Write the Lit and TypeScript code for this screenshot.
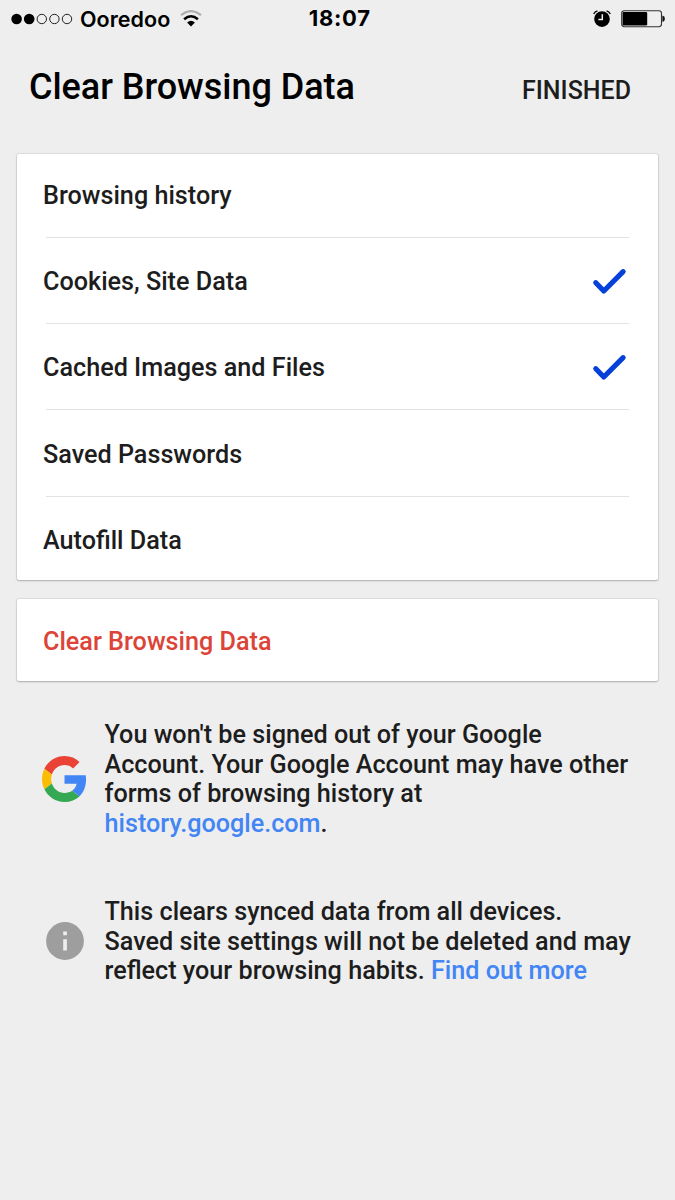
import { LitElement, html, css, svg } from "lit";
import { customElement } from "lit/decorators.js";

interface Option {
  label: string;
  checked: boolean;
}

const OPTIONS: Option[] = [
  { label: "Browsing history", checked: false },
  { label: "Cookies, Site Data", checked: true },
  { label: "Cached Images and Files", checked: true },
  { label: "Saved Passwords", checked: false },
  { label: "Autofill Data", checked: false },
];

@customElement("status-bar")
class StatusBar extends LitElement {
  static styles = css`
    :host {
      display: grid;
      grid-template-columns: 1fr auto 1fr;
      align-items: center;
      height: 37px;
      padding: 0 10px 0 11px;
      box-sizing: border-box;
      color: #000;
      font-family: Inter, "Liberation Sans", sans-serif;
      font-size: 21.5px;
      line-height: 26px;
    }
    svg { display: block; }
    .left { display: flex; align-items: center; }
    .carrier { margin-left: 7px; font-weight: 600; letter-spacing: 0.05px; }
    .wifi { margin-left: 10px; }
    .time { font-weight: 700; letter-spacing: 0.75px; font-size: 22px; padding-left: 3.5px; margin-top: -1px; }
    .right { display: flex; align-items: center; justify-content: flex-end; gap: 10px; }
  `;
  render() {
    return html`
      <div class="left">
        <svg width="62" height="12" viewBox="0 0 62 12">
          ${[0, 1, 2, 3, 4].map((i) =>
            i < 2
              ? svg`<circle cx=${5.6 + i * 12.6} cy="6" r="5.3" fill="#000" />`
              : svg`<circle cx=${5.6 + i * 12.6} cy="6" r="4.7" fill="none" stroke="#222" stroke-width="1" />`
          )}
        </svg>
        <span class="carrier">Ooredoo</span>
        <svg class="wifi" width="22" height="18" viewBox="0 0 22 18">
          <path d="M1 5.2 Q11 -3 21 5.2" fill="none" stroke="#adadad" stroke-width="2.2" />
          <path d="M4.1 9.2 Q11 3.4 17.9 9.2" fill="none" stroke="#000" stroke-width="2.5" />
          <path d="M7.1 12.6 Q11 9 14.9 12.6 L11 16.6 Z" fill="#000" />
        </svg>
      </div>
      <div class="time">18:07</div>
      <div class="right">
        <svg width="18" height="18" viewBox="0 0 18 18">
          <circle cx="9" cy="9.1" r="7.8" fill="#000" />
          <path d="M9.3 4.2 V9.4 H5.4" fill="none" stroke="#eee" stroke-width="1.5" />
          <path d="M0.7 4 Q1.8 1.6 4.4 0.9 M17.3 4 Q16.2 1.6 13.6 0.9" fill="none" stroke="#000" stroke-width="1.3" />
        </svg>
        <svg width="44" height="18" viewBox="0 0 44 18">
          <rect x="0.7" y="0.7" width="39.8" height="16" rx="2.6" fill="none" stroke="#333" stroke-width="1.1" />
          <rect x="1.6" y="1.9" width="24.6" height="13.6" rx="1.2" fill="#000" />
          <path d="M41.4 5.4 Q43.9 5.9 43.9 8.7 Q43.9 11.5 41.4 12 Z" fill="#111" />
        </svg>
      </div>
    `;
  }
}

@customElement("option-row")
class OptionRow extends LitElement {
  static properties = { label: {}, checked: { type: Boolean } };
  static styles = css`
    :host { display: flex; align-items: center; justify-content: space-between; }
    svg { display: block; margin-right: 2px; }
  `;
  declare label: string;
  declare checked: boolean;
  render() {
    return html`
      <span>${this.label}</span>
      ${this.checked
        ? html`<svg width="36" height="30" viewBox="0 0 36 30">
            <path d="M4.8 15.7 L12.8 24 L32.1 4.7" fill="none" stroke="#0541d8" stroke-width="5.2" stroke-linecap="round" stroke-linejoin="round" />
          </svg>`
        : ""}
    `;
  }
}

@customElement("app-root")
export class AppRoot extends LitElement {
  static styles = css`
    :host {
      display: block;
      box-sizing: border-box;
      min-height: 1200px;
      background: #eee;
      color: #1d1d1d;
      font-family: Roboto, "Liberation Sans", sans-serif;
      font-size: 25.2px;
      font-weight: 500;
      line-height: 29.5px;
    }
    .header {
      display: flex;
      align-items: baseline;
      justify-content: space-between;
      height: 93px;
      padding: 29px 44px 0 29px;
      margin-bottom: 23.5px;
      box-sizing: border-box;
    }
    h1 {
      margin: 0;
      color: #000;
      font-size: 36px;
      font-weight: 500;
      line-height: 42px;
      letter-spacing: -0.04px;
    }
    .done { font-size: 25px; }
    .card {
      margin: 0 17px 19px;
      background: #fff;
      border-radius: 2px;
      box-shadow: 0 0 1px 1px rgba(0, 0, 0, 0.07), 0 1px 2px rgba(0, 0, 0, 0.22);
    }
    .options {
      display: grid;
      grid-template-rows: 84px 86.3px 86.3px 86.5px 83.9px;
      padding: 0 29px 0 26px;
    }
    .line { display: grid; grid-template-rows: 1fr 1px; }
    .line option-row { padding-top: 3px; }
    .line:first-child option-row { padding-top: 1px; }
    .line::after { content: ""; background: #e2e2e2; margin-left: 3px; }
    .line:last-child { grid-template-rows: 1fr; }
    .line:last-child option-row { padding-top: 5px; }
    .line:last-child::after { display: none; }
    .action {
      display: flex;
      align-items: center;
      height: 82px;
      padding: 2px 26px 0;
      box-sizing: border-box;
      color: #db4437;
    }
    .note {
      display: grid;
      grid-template-columns: 46px 1fr;
      column-gap: 17px;
      align-items: center;
      padding: 0 20px 0 41.5px;
    }
    .note svg { display: block; margin: 0 auto; }
    .first { margin-top: 39px; }
    .second { margin-top: 59px; }
    .second svg { margin-bottom: 2px; }
    p { margin: 0; }
    .text { display: block; white-space: nowrap; }
    a { color: #4285f4; text-decoration: none; }
  `;

  render() {
    return html`
      <status-bar></status-bar>
      <div class="header">
        <h1>Clear Browsing Data</h1>
        <span class="done">FINISHED</span>
      </div>
      <div class="card options">
        ${OPTIONS.map(
          (o) => html`<div class="line"><option-row .label=${o.label} .checked=${o.checked}></option-row></div>`
        )}
      </div>
      <div class="card action">Clear Browsing Data</div>
      <div class="note first">
        <svg width="45" height="46" viewBox="0 0 48 48" preserveAspectRatio="none">
          <path fill="#ea4335" d="M24 9.5c3.54 0 6.71 1.22 9.21 3.6l6.85-6.85C35.9 2.38 30.47 0 24 0 14.62 0 6.51 5.38 2.56 13.22l7.98 6.19C12.43 13.72 17.74 9.5 24 9.5z" />
          <path fill="#4285f4" d="M46.98 24.55c0-1.57-.15-3.09-.38-4.55H24v9.02h12.94c-.58 2.96-2.26 5.48-4.78 7.18l7.73 6c4.51-4.18 7.09-10.36 7.09-17.65z" />
          <path fill="#fbbc05" d="M10.53 28.59c-.48-1.45-.76-2.99-.76-4.59s.27-3.14.76-4.59l-7.98-6.19C.92 16.46 0 20.12 0 24c0 3.88.92 7.54 2.56 10.78l7.97-6.19z" />
          <path fill="#34a853" d="M24 48c6.48 0 11.93-2.13 15.89-5.81l-7.73-6c-2.15 1.45-4.92 2.3-8.16 2.3-6.26 0-11.57-4.22-13.47-9.91l-7.98 6.19C6.51 42.62 14.62 48 24 48z" />
        </svg>
        <p>
          <span class="text">You won't be signed out of your Google</span>
          <span class="text">Account. Your Google Account may have other</span>
          <span class="text">forms of browsing history at</span>
          <span class="text"><a>history.google.com</a>.</span>
        </p>
      </div>
      <div class="note second">
        <svg width="38" height="38" viewBox="0 0 38 38">
          <circle cx="19" cy="19" r="18.9" fill="#9e9e9e" />
          <path d="M17.2 9.6h3.7v3.7h-3.7z M17.2 17.2h3.7v11.2h-3.7z" fill="#eee" />
        </svg>
        <p>
          <span class="text">This clears synced data from all devices.</span>
          <span class="text">Saved site settings will not be deleted and may</span>
          <span class="text">reflect your browsing habits. <a>Find out more</a></span>
        </p>
      </div>
    `;
  }
}
